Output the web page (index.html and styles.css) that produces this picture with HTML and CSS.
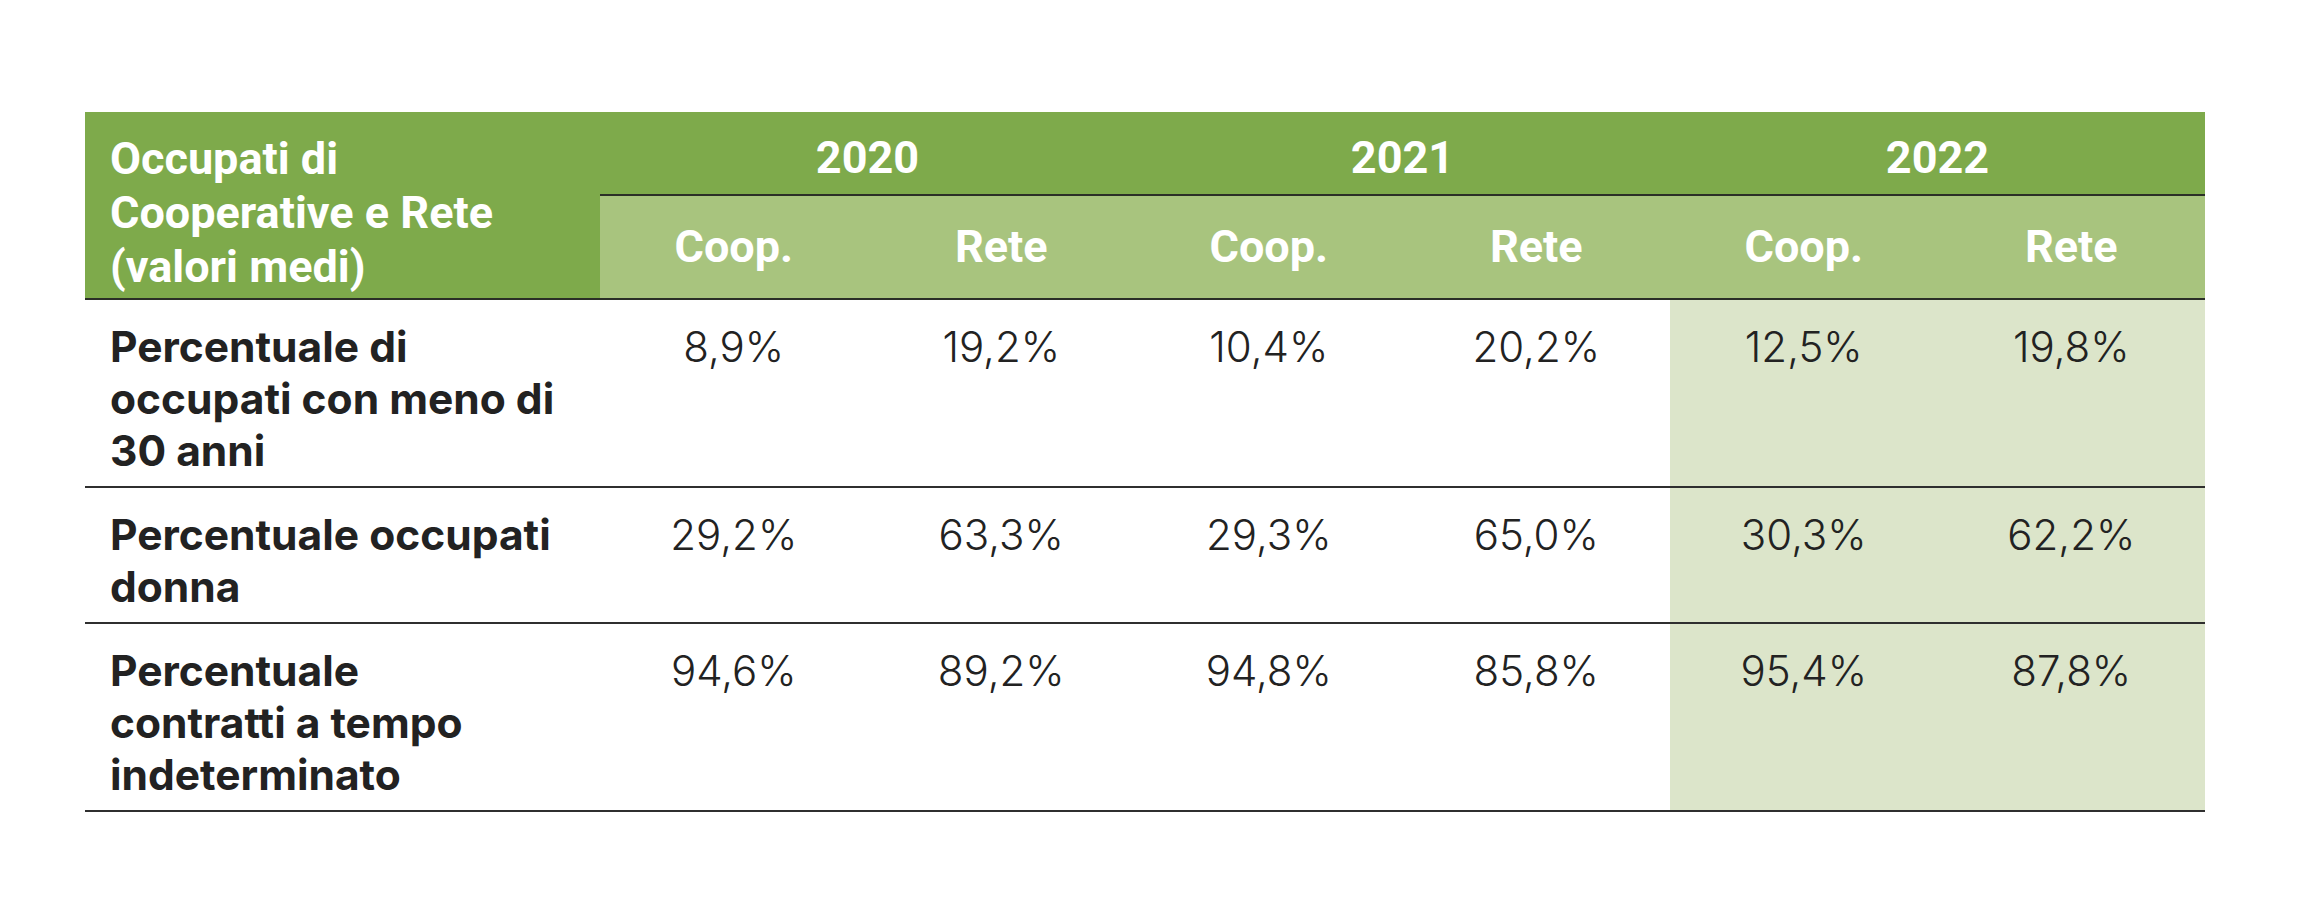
FILE: index.html
```
<!DOCTYPE html>
<html lang="it">
<head>
<meta charset="utf-8">
<title>Occupati di Cooperative e Rete</title>
<link rel="stylesheet" href="styles.css">
</head>
<body>
<table class="data">
  <colgroup>
    <col class="c-label">
    <col class="c-val"><col class="c-val">
    <col class="c-val"><col class="c-val">
    <col class="c-val"><col class="c-val">
  </colgroup>
  <thead>
    <tr class="years">
      <th class="corner" rowspan="2">Occupati di<br>Cooperative e Rete<br>(valori medi)</th>
      <th class="year" colspan="2">2020</th>
      <th class="year" colspan="2">2021</th>
      <th class="year" colspan="2">2022</th>
    </tr>
    <tr class="subs">
      <th class="sub">Coop.</th><th class="sub">Rete</th>
      <th class="sub">Coop.</th><th class="sub">Rete</th>
      <th class="sub">Coop.</th><th class="sub">Rete</th>
    </tr>
  </thead>
  <tbody>
    <tr>
      <th class="label">Percentuale di<br>occupati con meno di<br>30 anni</th>
      <td>8,9%</td><td>19,2%</td><td>10,4%</td><td>20,2%</td>
      <td class="hl">12,5%</td><td class="hl">19,8%</td>
    </tr>
    <tr>
      <th class="label">Percentuale occupati<br>donna</th>
      <td>29,2%</td><td>63,3%</td><td>29,3%</td><td>65,0%</td>
      <td class="hl">30,3%</td><td class="hl">62,2%</td>
    </tr>
    <tr>
      <th class="label">Percentuale<br>contratti a tempo<br>indeterminato</th>
      <td>94,6%</td><td>89,2%</td><td>94,8%</td><td>85,8%</td>
      <td class="hl">95,4%</td><td class="hl">87,8%</td>
    </tr>
  </tbody>
</table>
</body>
</html>
```
FILE: styles.css
```
html, body {
  margin: 0;
  padding: 0;
  background: #ffffff;
}

.data {
  margin: 112px 0 0 85px;
  width: 2120px;
  border-collapse: collapse;
  table-layout: fixed;
  font-family: Inter, "Noto Sans", sans-serif;
  color: #222222;
}

.c-label { width: 515px; }
.c-val { width: 267.5px; }

.data th,
.data td {
  padding: 0;
}

/* header */
.years th,
.subs th {
  font-family: Roboto, "Liberation Sans", sans-serif;
  font-weight: 700;
  color: #ffffff;
  font-size: 45px;
  line-height: 54px;
}

.corner {
  background: #7eaa4b;
  text-align: left;
  vertical-align: top;
  padding: 20px 0 4px 25px !important;
  border-bottom: 2px solid #2b2f27;
}

.year {
  background: #7eaa4b;
  text-align: center;
  height: 72px;
  padding-top: 10px !important;
  border-bottom: 2px solid #2b2f27;
}

.sub {
  background: #a8c47e;
  text-align: center;
  height: 101px;
  border-bottom: 2px solid #2b2f27;
}

/* body */
.label {
  text-align: left;
  vertical-align: top;
  font-weight: 700;
  font-size: 42.5px;
  line-height: 52px;
  padding: 21px 0 9px 25px !important;
  border-bottom: 2px solid #2f2f2f;
}

.data td {
  text-align: center;
  vertical-align: top;
  font-weight: 300;
  font-size: 42px;
  line-height: 52px;
  padding-top: 21px;
  border-bottom: 2px solid #2f2f2f;
}

.data td.hl {
  background: #dce5ca;
}
```
